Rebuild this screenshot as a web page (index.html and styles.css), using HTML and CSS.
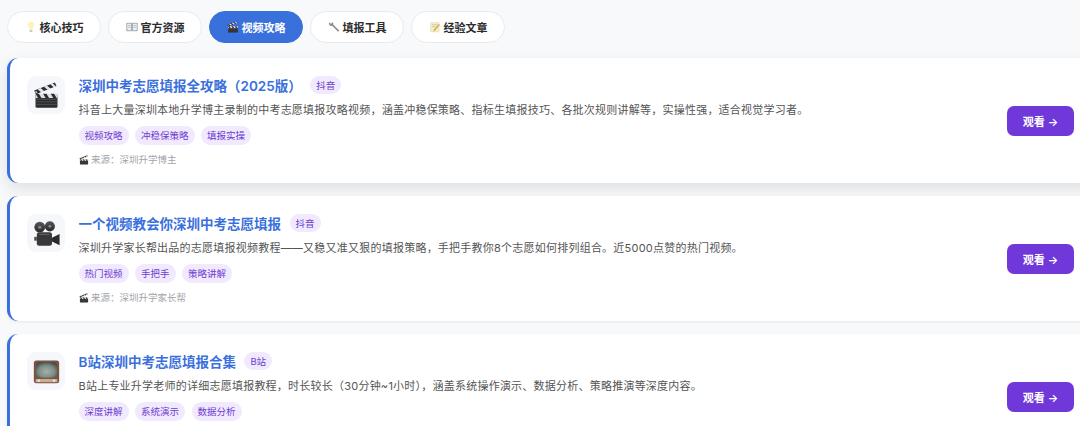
FILE: index.html
```html
<!DOCTYPE html>
<html>
  <head>
    <meta charset="utf-8">
    <title>视频攻略</title>
    <link rel="stylesheet" href="styles.css">
  </head>
  <body>
    <svg class="sprites" width="0" height="0">
      <defs>
        <radialGradient id="screen" cx="50%" cy="60%" r="70%">
          <stop offset="0" stop-color="#a4b1a9"/>
          <stop offset=".55" stop-color="#7d8c85"/>
          <stop offset="1" stop-color="#333e3b"/>
        </radialGradient>
        <linearGradient id="reel" x1="0" y1="0" x2="0" y2="1">
          <stop offset="0" stop-color="#55565a"/>
          <stop offset="1" stop-color="#2a2a2c"/>
        </linearGradient>
      </defs>
      <symbol id="clapper" viewBox="0 0 32 32">
        <path d="M3 15h26v14a1.500 1.500 0 0 1-1.500 1.500h-23A1.500 1.500 0 0 1 3 29z" fill="#2d2d2f"/>
        <path d="M3 20.500h26M3 23.500h26M3 26.500h26" stroke="#5e5f63" stroke-width=".8"/>
        <path d="M3 14h26v5H3z" fill="#dfdfe1"/>
        <path d="M3 14h4l3 5H6zM12 14h4l3 5h-4zM21 14h4l3 5h-4z" fill="#2d2d2f"/>
        <path d="M1.500 10 26 .5l1.800 4.300L3.300 14.500z" fill="#2d2d2f"/>
        <path d="M5.500 8.500l4.300 3.800 3.600-1.400-4.300-3.800zM13 5.500l4.300 3.800 3.600-1.400-4.300-3.800zM20.500 2.700l4.300 3.800 2.500-1-3.900-3.900z" fill="#e6e6e8"/>
        <circle cx="3.800" cy="12" r="1.200" fill="#b9babd"/>
      </symbol>
      <symbol id="camera" viewBox="0 0 32 32">
        <circle cx="8" cy="8.500" r="6.400" fill="url(#reel)"/>
        <circle cx="20" cy="7.500" r="6" fill="url(#reel)"/>
        <circle cx="8" cy="8.500" r="1.800" fill="#88898d"/>
        <circle cx="20" cy="7.500" r="1.700" fill="#88898d"/>
        <rect x="4.500" y="14.500" width="18" height="16" rx="3" fill="#38383b"/>
        <path d="M7.500 17h12" stroke="#66676b" stroke-width="1.200"/>
        <path d="M22.500 21l9-4.500v13.500l-9-4.500z" fill="#2a2a2c"/>
        <path d="M1.500 20h3v4.500h-3z" fill="#4a4a4e"/>
      </symbol>
      <symbol id="tv" viewBox="0 0 32 32">
        <rect x="1" y="3" width="30" height="27" rx="3" fill="#7b5242"/>
        <rect x="3.500" y="5" width="25" height="18.500" rx="5" fill="url(#screen)"/>
        <rect x="3" y="25" width="26" height="3.600" rx="1" fill="#c9ae92"/>
        <circle cx="7" cy="26.800" r="1.400" fill="#f1e7d8"/>
        <circle cx="25" cy="26.800" r="1.400" fill="#f1e7d8"/>
      </symbol>
      <symbol id="bulb" viewBox="0 0 16 16">
        <path d="M8 1a4.500 4.500 0 0 0-2.500 8.200V11h5V9.200A4.500 4.500 0 0 0 8 1z" fill="#fdf3b4"/>
        <rect x="6" y="11.500" width="4" height="3" rx="1" fill="#c9c9c4"/>
      </symbol>
      <symbol id="book" viewBox="0 0 16 16">
        <path d="M1 3h6.500v10H1zM8.500 3H15v10H8.500z" fill="#eef0f2" stroke="#7d8590" stroke-width=".9"/>
        <path d="M2.500 6h4M2.500 8.500h4M9.500 6h4M9.500 8.500h4" stroke="#a5abb3" stroke-width=".8"/>
      </symbol>
      <symbol id="wrench" viewBox="0 0 16 16">
        <path d="M2 1.500a3.200 3.200 0 0 0 0 4 3.200 3.200 0 0 0 3.500.8l8 8 1.500-1.500-8-8a3.200 3.200 0 0 0-.8-3.500L4.500 3.500 3 3z" fill="#8b8f96"/>
      </symbol>
      <symbol id="memo" viewBox="0 0 16 16">
        <rect x="2" y="2" width="11.500" height="12.500" rx="1" fill="#f4edc9" stroke="#d9d3b4" stroke-width=".6"/>
        <path d="M4 5h7M4 7.500h5" stroke="#b5b09a" stroke-width=".7"/>
        <path d="M14.500 5 8 12.500l-2 1.500.5-2.500L13 4z" fill="#e0a33c"/>
      </symbol>
    </svg>

    <nav class="tabs">
      <button class="tab"><svg class="tab-icon"><use href="#bulb"/></svg>核心技巧</button>
      <button class="tab"><svg class="tab-icon"><use href="#book"/></svg>官方资源</button>
      <button class="tab active"><svg class="tab-icon"><use href="#clapper"/></svg>视频攻略</button>
      <button class="tab"><svg class="tab-icon"><use href="#wrench"/></svg>填报工具</button>
      <button class="tab"><svg class="tab-icon"><use href="#memo"/></svg>经验文章</button>
    </nav>

    <div class="card-list">
      <div class="card raised">
        <div class="card-icon"><svg><use href="#clapper"/></svg></div>
        <div class="card-body">
          <div class="card-head">
            <a class="card-title">深圳中考志愿填报全攻略（2025版）</a>
            <span class="platform">抖音</span>
          </div>
          <p class="card-desc">抖音上大量深圳本地升学博主录制的中考志愿填报攻略视频，涵盖冲稳保策略、指标生填报技巧、各批次规则讲解等，实操性强，适合视觉学习者。</p>
          <div class="tag-row">
            <span class="tag">视频攻略</span>
            <span class="tag">冲稳保策略</span>
            <span class="tag">填报实操</span>
          </div>
          <div class="source"><svg class="source-icon"><use href="#clapper"/></svg>来源：深圳升学博主</div>
        </div>
        <button class="watch">观看 →</button>
      </div>

      <div class="card">
        <div class="card-icon"><svg><use href="#camera"/></svg></div>
        <div class="card-body">
          <div class="card-head">
            <a class="card-title">一个视频教会你深圳中考志愿填报</a>
            <span class="platform">抖音</span>
          </div>
          <p class="card-desc">深圳升学家长帮出品的志愿填报视频教程——又稳又准又狠的填报策略，手把手教你8个志愿如何排列组合。近5000点赞的热门视频。</p>
          <div class="tag-row">
            <span class="tag">热门视频</span>
            <span class="tag">手把手</span>
            <span class="tag">策略讲解</span>
          </div>
          <div class="source"><svg class="source-icon"><use href="#clapper"/></svg>来源：深圳升学家长帮</div>
        </div>
        <button class="watch">观看 →</button>
      </div>

      <div class="card">
        <div class="card-icon"><svg><use href="#tv"/></svg></div>
        <div class="card-body">
          <div class="card-head">
            <a class="card-title">B站深圳中考志愿填报合集</a>
            <span class="platform">B站</span>
          </div>
          <p class="card-desc">B站上专业升学老师的详细志愿填报教程，时长较长（30分钟~1小时），涵盖系统操作演示、数据分析、策略推演等深度内容。</p>
          <div class="tag-row">
            <span class="tag">深度讲解</span>
            <span class="tag">系统演示</span>
            <span class="tag">数据分析</span>
          </div>
        </div>
        <button class="watch">观看 →</button>
      </div>
    </div>
  </body>
</html>
```

FILE: styles.css
```css
html, body {
  height: 426px;
  overflow: hidden;
}

body {
  margin: 0;
  background-color: #f7f9fb;
  color: #333;
  font-family: Inter, "Noto Sans CJK SC", sans-serif;
}

.sprites {
  display: block;
  height: 0;
}

.tabs {
  display: flex;
  gap: 7px;
  padding: 11px 7px 15px;
}

.tab {
  display: flex;
  align-items: center;
  justify-content: center;
  gap: 3px;
  box-sizing: border-box;
  width: 94px;
  height: 32px;
  padding: 0;
  background-color: #fff;
  border: 1.500px solid #e8ebef;
  border-radius: 16px;
  color: #2c2c2e;
  font-family: inherit;
  font-size: 11px;
  font-weight: 600;
}

.tab.active {
  background-color: #3a70dc;
  border-color: #3a70dc;
  color: #fff;
}

.tab-icon {
  width: 12px;
  height: 12px;
}

.card-list {
  display: flex;
  flex-direction: column;
  gap: 13px;
  width: 1088px;
  margin-left: 7px;
}

.card {
  display: flex;
  align-items: flex-start;
  box-sizing: border-box;
  height: 125px;
  padding: 0 21px 0 17px;
  background-color: #fff;
  border-left: 3px solid #3a70dc;
  border-radius: 11px;
  box-shadow: 0 1px 3px rgba(0, 0, 0, 0.08);
}

.card.raised {
  box-shadow: 0 6px 16px rgba(0, 0, 0, 0.1);
}

.card-icon {
  display: flex;
  align-items: center;
  justify-content: center;
  flex-shrink: 0;
  width: 38px;
  height: 38px;
  margin-top: 18px;
  margin-right: 13.500px;
  background-color: #f5f7fa;
  border-radius: 9px;
}

.card-icon svg {
  width: 27px;
  height: 27px;
}

.card-body {
  flex: 1;
  padding-top: 17px;
}

.card-head {
  display: flex;
  align-items: center;
  gap: 8.500px;
  height: 20px;
}

.card-title {
  color: #3a70dc;
  font-size: 13.500px;
  font-weight: 600;
}

.platform {
  padding: 2px 6px;
  background-color: #f1e9fd;
  border-radius: 9px;
  color: #6d3bd0;
  font-size: 9.500px;
}

.card-desc {
  margin: 7px 0;
  color: #555;
  font-size: 11px;
  letter-spacing: 0.230px;
  line-height: 17px;
}

.tag-row {
  display: flex;
  gap: 6.500px;
}

.tag {
  padding: 2px 6px;
  background-color: #f1e9fd;
  border-radius: 10px;
  color: #6d3bd0;
  font-size: 9.500px;
  line-height: 15px;
}

.source {
  display: flex;
  align-items: center;
  gap: 2.500px;
  margin-top: 8px;
  color: #a3a3a8;
  font-size: 9.500px;
  line-height: 14px;
}

.source-icon {
  width: 10px;
  height: 10px;
}

.watch {
  flex-shrink: 0;
  width: 67px;
  height: 30px;
  margin-top: 48px;
  padding: 0;
  background-color: #7038d8;
  border: none;
  border-radius: 7px;
  color: #fff;
  font-family: inherit;
  font-size: 11px;
  font-weight: 600;
}
```
